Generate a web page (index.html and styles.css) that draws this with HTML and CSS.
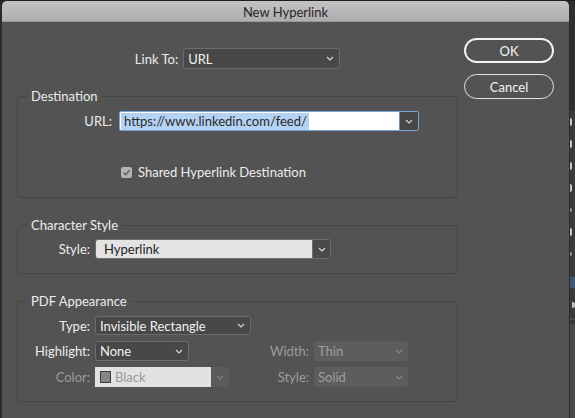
FILE: index.html
```html
<!DOCTYPE html>
<html lang="en">
<head>
    <meta charset="UTF-8">
    <title>New Hyperlink</title>
    <link rel="stylesheet" href="styles.css">
</head>
<body>
    <div class="screen">
        <div class="dialog">
            <div class="titlebar">New Hyperlink</div>

            <div class="dialog-body">
                <div class="main">
                    <!-- Link type -->
                    <div class="link-row">
                        <span class="label">Link To:</span>
                        <div class="select select-dark select-link">
                            <span class="select-text">URL</span>
                            <svg class="chevron" width="8" height="5" viewBox="0 0 8 5"><path d="M1 1 L4 4 L7 1"/></svg>
                        </div>
                    </div>

                    <!-- Destination -->
                    <fieldset class="group group-dest">
                        <legend>Destination</legend>
                        <div class="form-row dest-row">
                            <span class="label">URL:</span>
                            <div class="combo">
                                <div class="combo-input"><span class="selected-text">https://www.linkedin.com/feed/</span></div>
                                <div class="combo-btn">
                                    <svg class="chevron" width="8" height="5" viewBox="0 0 8 5"><path d="M1 1 L4 4 L7 1"/></svg>
                                </div>
                            </div>
                        </div>
                        <div class="check-row">
                            <span class="checkbox">
                                <svg width="11" height="11" viewBox="0 0 11 11"><path d="M2.6 5.6 L4.7 7.8 L8.5 3.2"/></svg>
                            </span>
                            <span>Shared Hyperlink Destination</span>
                        </div>
                    </fieldset>

                    <!-- Character style -->
                    <fieldset class="group group-char">
                        <legend>Character Style</legend>
                        <div class="form-row">
                            <span class="label">Style:</span>
                            <div class="select select-light select-style">
                                <span class="select-text">Hyperlink</span>
                                <span class="select-btn">
                                    <svg class="chevron" width="8" height="5" viewBox="0 0 8 5"><path d="M1 1 L4 4 L7 1"/></svg>
                                </span>
                            </div>
                        </div>
                    </fieldset>

                    <!-- PDF appearance -->
                    <fieldset class="group group-pdf">
                        <legend>PDF Appearance</legend>
                        <div class="pdf-grid">
                            <span class="label">Type:</span>
                            <div class="select select-dark select-type">
                                <span class="select-text">Invisible Rectangle</span>
                                <svg class="chevron" width="8" height="5" viewBox="0 0 8 5"><path d="M1 1 L4 4 L7 1"/></svg>
                            </div>

                            <span class="label">Highlight:</span>
                            <div class="select select-dark select-highlight">
                                <span class="select-text">None</span>
                                <svg class="chevron" width="8" height="5" viewBox="0 0 8 5"><path d="M1 1 L4 4 L7 1"/></svg>
                            </div>
                            <span class="label disabled">Width:</span>
                            <div class="select select-disabled">
                                <span class="select-text">Thin</span>
                                <svg class="chevron" width="8" height="5" viewBox="0 0 8 5"><path d="M1 1 L4 4 L7 1"/></svg>
                            </div>

                            <span class="label disabled">Color:</span>
                            <div class="select select-color">
                                <span class="select-text"><span class="swatch"></span>Black</span>
                                <span class="select-btn">
                                    <svg class="chevron" width="8" height="5" viewBox="0 0 8 5"><path d="M1 1 L4 4 L7 1"/></svg>
                                </span>
                            </div>
                            <span class="label disabled">Style:</span>
                            <div class="select select-disabled">
                                <span class="select-text">Solid</span>
                                <svg class="chevron" width="8" height="5" viewBox="0 0 8 5"><path d="M1 1 L4 4 L7 1"/></svg>
                            </div>
                        </div>
                    </fieldset>
                </div>

                <div class="buttons">
                    <button class="btn btn-default">OK</button>
                    <button class="btn">Cancel</button>
                </div>
            </div>
        </div>

        <!-- panel peeking out behind the dialog -->
        <div class="side-panel">
            <div class="side-top"></div>
            <div class="side-row"><span class="mark"></span></div>
            <div class="side-row"><span class="mark"></span></div>
            <div class="side-row"><span class="mark"></span></div>
            <div class="side-row"><span class="mark"></span></div>
            <div class="side-row"><span class="mark mark-dash"></span></div>
            <div class="side-row"><span class="mark"></span></div>
            <div class="side-row"><span class="mark mark-dash"></span></div>
            <div class="side-active"></div>
            <div class="side-icon"><span class="mark mark-icon"></span></div>
            <div class="side-ticks"></div>
            <div class="side-bottom"></div>
        </div>
    </div>
</body>
</html>
```

FILE: styles.css
```css
/* Base */
* {
    margin: 0;
    padding: 0;
    box-sizing: border-box;
}

body {
    font-family: Lato, "Liberation Sans", sans-serif;
    font-size: 13px;
    color: #ececec;
    background-color: #2b2b2b;
}

.screen {
    display: flex;
    width: 575px;
    height: 418px;
    overflow: hidden;
    border-top: 1px solid #1f1f1f;
}

/* Dialog window */
.dialog {
    flex: none;
    width: 567px;
    height: 417px;
    margin-left: 2px;
    background-color: #535353;
    border-radius: 5px 5px 0 0;
    overflow: hidden;
}

.titlebar {
    height: 21px;
    line-height: 22px;
    text-align: center;
    color: #262626;
    background: linear-gradient(#c4c2c2, #afadad);
    border-bottom: 1px solid #9a9898;
}

.dialog-body {
    display: flex;
    padding: 0 15px 0 15px;
}

.main {
    width: 441px;
    padding-top: 26px;
}

.label {
    text-align: right;
    white-space: nowrap;
}

.label.disabled {
    color: #9c9c9c;
}

/* Link To row */
.link-row {
    display: flex;
    justify-content: center;
    align-items: center;
    gap: 5px;
    height: 21px;
}

/* Dropdowns */
.select {
    display: flex;
    align-items: center;
    height: 20px;
    border-radius: 3px;
    white-space: nowrap;
}

.select-text {
    flex: 1;
    display: flex;
    align-items: center;
    height: 100%;
    padding-left: 4px;
}

.chevron {
    flex: none;
    margin-right: 5px;
    fill: none;
    stroke: #d8d8d8;
    stroke-width: 1.1;
}

.select-dark {
    background-color: #484848;
    border: 1px solid #6c6c6c;
    color: #f2f2f2;
}

.select-link {
    width: 157px;
    height: 21px;
}

.select-type {
    grid-column: 2 / span 3;
    width: 156px;
    height: 19px;
}

.select-highlight {
    width: 94px;
}

.select-light {
    border: 1px solid #6e6e6e;
    overflow: hidden;
}

.select-light .select-text {
    background-color: #e3e3e3;
    color: #1e1e1e;
    padding-left: 8px;
}

.select-btn {
    display: flex;
    align-items: center;
    justify-content: center;
    width: 18px;
    height: 100%;
    background-color: #4a4a4a;
    border-left: 1px solid #6e6e6e;
}

.select-btn .chevron {
    margin-right: 0;
}

.select-style {
    width: 236px;
}

.select-disabled {
    width: 94px;
    background-color: #5d5d5d;
    color: #9d9d9d;
}

.select-disabled .chevron {
    stroke: #898989;
}

.select-color {
    width: 134px;
    border-radius: 0 3px 3px 0;
}

.select-color .select-text {
    background-color: #e2e2e2;
    color: #9a9a9a;
    padding-left: 5px;
}

.select-color .select-btn {
    background-color: #5b5b5b;
    border: none;
    border-radius: 0 3px 3px 0;
}

.select-color .chevron {
    stroke: #808080;
}

.swatch {
    width: 11px;
    height: 12px;
    margin-right: 4px;
    background-color: #878787;
    border: 1px solid #3a3a3a;
}

/* Group boxes */
.group {
    margin: 19px 0 0;
    border: 1px solid #454545;
    border-radius: 4px;
    min-inline-size: 0;
}

.group legend {
    margin-left: 9px;
    padding: 0 4px;
    line-height: 16px;
    color: #ececec;
}

.form-row {
    display: grid;
    grid-template-columns: 72px auto;
    column-gap: 5px;
    align-items: center;
}

.group-dest {
    padding: 7px 0 18px;
}

.dest-row {
    grid-template-columns: 94px auto;
    column-gap: 7px;
}

.combo {
    display: flex;
    width: 300px;
    height: 20px;
    border: 1px solid #79a3d6;
    border-radius: 2px;
    overflow: hidden;
}

.combo-input {
    flex: 1;
    display: flex;
    align-items: center;
    padding-left: 1px;
    background-color: #fff;
}

.selected-text {
    line-height: 17px;
    padding: 0 2px 0 3px;
    background-color: #b4d2f3;
    color: #2a2a2a;
}

.combo-btn {
    display: flex;
    align-items: center;
    justify-content: center;
    width: 19px;
    background-color: #474747;
    border-left: 1px solid #6f8fb5;
}

.combo-btn .chevron {
    margin-right: 0;
}

.check-row {
    display: flex;
    align-items: center;
    gap: 6px;
    height: 14px;
    margin-top: 34px;
    padding-left: 103px;
}

.checkbox {
    display: flex;
    width: 11px;
    height: 11px;
    border-radius: 2px;
    background-color: #b2b2b2;
}

.checkbox path {
    fill: none;
    stroke: #5e5e5e;
    stroke-width: 1.4;
}

.group-char {
    padding: 6px 0 14px;
}

.group-pdf {
    padding: 7px 0 14px;
}

.pdf-grid {
    display: grid;
    grid-template-columns: 72px 134px 75px 94px;
    column-gap: 5px;
    row-gap: 6px;
    align-items: center;
}

/* Buttons */
.buttons {
    display: flex;
    flex-direction: column;
    gap: 11px;
    width: 90px;
    margin-left: 6px;
    padding-top: 16px;
}

.btn {
    height: 25px;
    border: 1px solid #e2e2e2;
    border-radius: 13px;
    background-color: transparent;
    color: #f4f4f4;
    font-family: inherit;
    font-size: 13px;
}

.btn-default {
    border: 2px solid #f2f2f2;
}

/* Background panel on the right */
.side-panel {
    flex: 1;
    display: flex;
    flex-direction: column;
    background-color: #3a3a3a;
    border-left: 1px solid #2a2a2a;
    overflow: hidden;
}

.side-top {
    height: 110px;
    background-color: #2f2f2f;
}

.side-row {
    display: flex;
    align-items: center;
    height: 22px;
    border-bottom: 1px solid #333;
}

.mark {
    width: 2px;
    height: 8px;
    border-radius: 0 2px 2px 0;
    background-color: #c8c8c8;
}

.mark-dash {
    height: 4px;
    background-color: #999;
}

.side-active {
    height: 11px;
    margin-top: 12px;
    background-color: #3e5679;
}

.side-icon {
    display: flex;
    height: 22px;
    padding: 14px 0 0 2px;
}

.mark-icon {
    width: 4px;
    height: 6px;
    background-color: #bbb;
}

.side-ticks {
    height: 6px;
    margin-top: 8px;
    border-top: 2px dotted #555;
}

.side-bottom {
    flex: 1;
    background-color: #4a4a4a;
}
```
